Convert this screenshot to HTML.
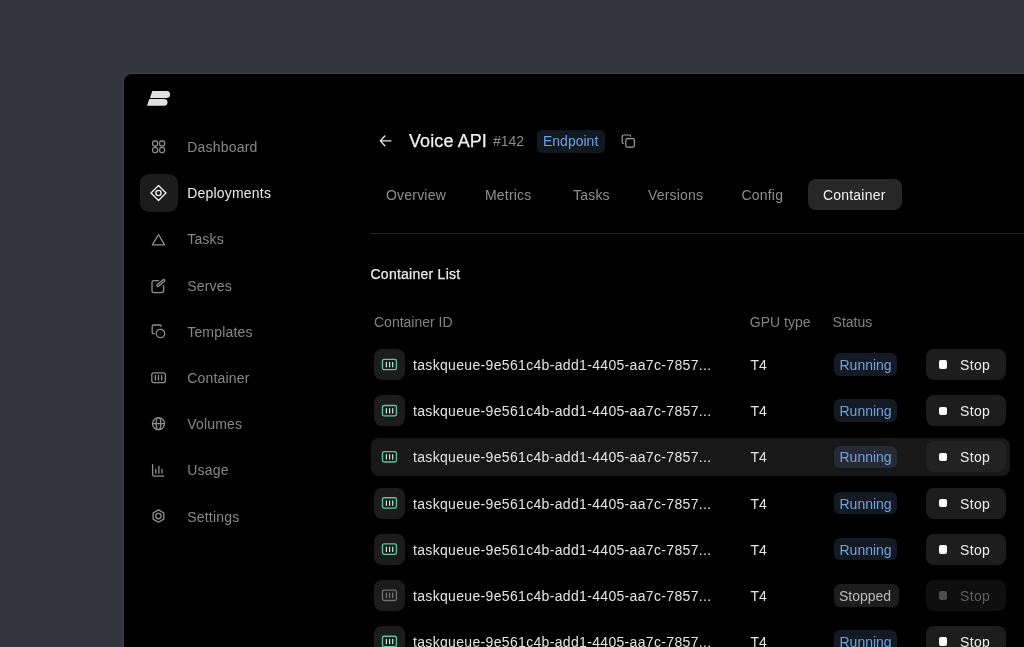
<!DOCTYPE html>
<html><head><meta charset="utf-8"><title>Container</title><style>
*{margin:0;padding:0;box-sizing:border-box}
html,body{width:1024px;height:647px;overflow:hidden;background:#33363d;font-family:"Liberation Sans",sans-serif}
#root{position:absolute;left:0;top:0;width:1024px;height:647px;will-change:transform}
.abs{position:absolute}
.t{position:absolute;font-size:14px;line-height:20px;white-space:nowrap}
#panel{position:absolute;left:123px;top:73px;width:920px;height:600px;background:#000000;border-radius:9px;border:1px solid #3d4047}
svg{position:absolute;overflow:visible}
</style></head>
<body><div id="root">
<div id="panel"></div>
<svg class="abs" style="left:0;top:0" width="1024" height="647"><g fill="#e0e0e0">
<path d="M152.3 91 H166.6 A3.45 3.45 0 0 1 166.6 97.9 H149.9 Z"/>
<path d="M149.3 99 H164.2 A3.35 3.35 0 0 1 164.2 105.7 H147 Z"/>
</g></svg>
<div class="abs" style="left:140px;top:174px;width:38px;height:38px;border-radius:9px;background:#1c1c1c"></div>
<div class="t" style="left:187.2px;top:137.05px;color:#878787;letter-spacing:0.2px">Dashboard</div>
<div class="t" style="left:187.2px;top:183.25px;color:#ececec;letter-spacing:0.2px">Deployments</div>
<div class="t" style="left:187.2px;top:229.45px;color:#878787;letter-spacing:0.2px">Tasks</div>
<div class="t" style="left:187.2px;top:275.65px;color:#878787;letter-spacing:0.2px">Serves</div>
<div class="t" style="left:187.2px;top:321.85px;color:#878787;letter-spacing:0.2px">Templates</div>
<div class="t" style="left:187.2px;top:368.05px;color:#878787;letter-spacing:0.2px">Container</div>
<div class="t" style="left:187.2px;top:414.25px;color:#878787;letter-spacing:0.2px">Volumes</div>
<div class="t" style="left:187.2px;top:460.45px;color:#878787;letter-spacing:0.2px">Usage</div>
<div class="t" style="left:187.2px;top:506.65px;color:#878787;letter-spacing:0.2px">Settings</div>
<svg style="left:0;top:0" width="1024" height="647" fill="none" stroke="#8f8f8f" stroke-width="1.3" stroke-linecap="round" stroke-linejoin="round">
<g><rect x="152.6" y="141" width="5" height="5" rx="1.8"/><rect x="159.6" y="141" width="5" height="5" rx="1.8"/><rect x="152.6" y="147.6" width="5" height="5" rx="1.8"/><rect x="159.6" y="147.6" width="5" height="5" rx="1.8"/></g>
<g stroke="#f0f0f0" stroke-width="1.4"><path d="M158.5 185.5 L166 193 L158.5 200.5 L151 193 Z"/><circle cx="158.5" cy="193" r="2.6"/></g>
<path d="M158.5 234.5 L164.6 244.8 H152.4 Z"/>
<path d="M158.6 280.6 H154 A2 2 0 0 0 152 282.6 V290.6 A2 2 0 0 0 154 292.6 H161.6 A2 2 0 0 0 163.6 290.6 V285.6"/>
<rect x="155.9" y="282.1" width="9.8" height="1.9" rx="0.95" transform="rotate(-40 160.8 283.05)"/>
<path d="M154.3 333.7 H153.5 A1.3 1.3 0 0 1 152.2 332.4 V326.3 A1.3 1.3 0 0 1 153.5 325 H159.8 A1.3 1.3 0 0 1 161.1 326.3"/>
<circle cx="160.5" cy="333.5" r="4.2"/>
<rect x="151.8" y="372.8" width="13.6" height="9.8" rx="2"/>
<path d="M155.4 375.4 V380.1 M158.5 375.4 V380.1 M161.6 375.4 V380.1"/>
<circle cx="158.5" cy="423.7" r="6.0"/><path d="M152.5 423.7 H164.5"/><ellipse cx="158.5" cy="423.7" rx="2.3" ry="6.0"/>
<path d="M152.6 464.6 V474.6 A1.6 1.6 0 0 0 154.2 476.2 H163.8"/>
<path d="M155.8 469.5 V473.2 M158.9 466.5 V473.2 M162 469.5 V473.2"/>
<path d="M158.45 509.9 L163.8 513 V519.1 L158.45 522.2 L153.1 519.1 V513 Z"/><circle cx="158.45" cy="516.05" r="2.7"/>
</svg>
<svg style="left:0;top:0" width="1024" height="647" fill="none" stroke="#e6e6e6" stroke-width="1.4" stroke-linecap="round" stroke-linejoin="round">
<path d="M390.9 140.9 H380.4 M384.8 136 L380.4 140.9 L384.8 145.8"/>
<g stroke="#a0a0a0" stroke-width="1.95" transform="translate(621.0 133.8) scale(0.605)"><rect x="8" y="8" width="14" height="14" rx="2.4"/><path d="M4 16c-1.1 0-2-.9-2-2V4c0-1.1.9-2 2-2h10c1.1 0 2 .9 2 2"/></g>
</svg>
<div class="t" style="left:409px;top:128.66px;font-size:18px;line-height:24px;color:#f2f2f2;letter-spacing:0.1px;-webkit-text-stroke:0.25px #f2f2f2">Voice API</div>
<div class="t" style="left:493px;top:130.95px;color:#8c8c8c">#142</div>
<div class="abs" style="left:537px;top:129.5px;width:68px;height:23px;border-radius:5px;background:#12181f"></div>
<div class="t" style="left:543px;top:130.95px;color:#6ca2e8">Endpoint</div>
<div class="t" style="left:386px;top:184.75px;color:#8e8e8e;letter-spacing:0.2px">Overview</div>
<div class="t" style="left:485px;top:184.75px;color:#8e8e8e;letter-spacing:0.2px">Metrics</div>
<div class="t" style="left:573px;top:184.75px;color:#8e8e8e;letter-spacing:0.2px">Tasks</div>
<div class="t" style="left:648px;top:184.75px;color:#8e8e8e;letter-spacing:0.2px">Versions</div>
<div class="t" style="left:741.5px;top:184.75px;color:#8e8e8e;letter-spacing:0.2px">Config</div>
<div class="abs" style="left:808px;top:179px;width:94px;height:31px;border-radius:8px;background:#272727"></div>
<div class="t" style="left:823px;top:184.75px;color:#f2f2f2;letter-spacing:0.2px">Container</div>
<div class="abs" style="left:370px;top:233px;width:660px;height:1px;background:#232323"></div>
<div class="t" style="left:370.5px;top:263.95px;color:#ececec;letter-spacing:0.25px;-webkit-text-stroke:0.25px #ececec">Container List</div>
<div class="t" style="left:374px;top:312.15px;color:#838383">Container ID</div>
<div class="t" style="left:749.8px;top:312.05px;color:#838383">GPU type</div>
<div class="t" style="left:832.6px;top:312.05px;color:#838383">Status</div>
<div class="abs" style="left:374.3px;top:349.2px;width:31px;height:31px;border-radius:8px;background:#1c1c1c"></div>
<svg style="left:0;top:0" width="1024" height="647" fill="none" stroke-linecap="round"><rect x="382.45" y="359.3" width="14" height="10.4" rx="1.7" stroke="#62c39e" stroke-width="1.35"/><path d="M386.4 362.4 V366.8 M389.6 362.4 V366.8 M392.7 362.4 V366.8" stroke="#bfe6d4" stroke-width="1.25"/></svg>
<div class="t" style="left:413px;top:354.85px;color:#e4e4e4;letter-spacing:0.33px">taskqueue-9e561c4b-add1-4405-aa7c-7857...</div>
<div class="t" style="left:750.5px;top:354.85px;color:#e4e4e4">T4</div>
<div class="abs" style="left:834px;top:353.3px;width:63px;height:22.6px;border-radius:6px;background:rgba(68,93,125,0.28)"></div>
<div class="t" style="left:839.5px;top:354.85px;color:#74a2dc">Running</div>
<div class="abs" style="left:926px;top:349.1px;width:80px;height:31px;border-radius:8px;background:#1d1d1d"></div>
<div class="abs" style="left:938.8px;top:360.4px;width:8.5px;height:8.5px;border-radius:2px;background:#ffffff"></div>
<div class="t" style="left:960px;top:354.85px;color:#ececec;letter-spacing:0.35px">Stop</div>
<div class="abs" style="left:374.3px;top:395.35px;width:31px;height:31px;border-radius:8px;background:#1c1c1c"></div>
<svg style="left:0;top:0" width="1024" height="647" fill="none" stroke-linecap="round"><rect x="382.45" y="405.45" width="14" height="10.4" rx="1.7" stroke="#62c39e" stroke-width="1.35"/><path d="M386.4 408.55 V412.95 M389.6 408.55 V412.95 M392.7 408.55 V412.95" stroke="#bfe6d4" stroke-width="1.25"/></svg>
<div class="t" style="left:413px;top:401.07px;color:#e4e4e4;letter-spacing:0.33px">taskqueue-9e561c4b-add1-4405-aa7c-7857...</div>
<div class="t" style="left:750.5px;top:401.07px;color:#e4e4e4">T4</div>
<div class="abs" style="left:834px;top:399.45px;width:63px;height:22.6px;border-radius:6px;background:rgba(68,93,125,0.28)"></div>
<div class="t" style="left:839.5px;top:401.07px;color:#74a2dc">Running</div>
<div class="abs" style="left:926px;top:395.25px;width:80px;height:31px;border-radius:8px;background:#1d1d1d"></div>
<div class="abs" style="left:938.8px;top:406.55px;width:8.5px;height:8.5px;border-radius:2px;background:#ffffff"></div>
<div class="t" style="left:960px;top:401.07px;color:#ececec;letter-spacing:0.35px">Stop</div>
<div class="abs" style="left:371px;top:437.9px;width:639px;height:38px;border-radius:8px;background:#181818"></div>
<svg style="left:0;top:0" width="1024" height="647" fill="none" stroke-linecap="round"><rect x="382.45" y="451.6" width="14" height="10.4" rx="1.7" stroke="#62c39e" stroke-width="1.35"/><path d="M386.4 454.7 V459.1 M389.6 454.7 V459.1 M392.7 454.7 V459.1" stroke="#bfe6d4" stroke-width="1.25"/></svg>
<div class="t" style="left:413px;top:447.29px;color:#e4e4e4;letter-spacing:0.33px">taskqueue-9e561c4b-add1-4405-aa7c-7857...</div>
<div class="t" style="left:750.5px;top:447.29px;color:#e4e4e4">T4</div>
<div class="abs" style="left:834px;top:445.6px;width:63px;height:22.6px;border-radius:6px;background:rgba(68,93,125,0.28)"></div>
<div class="t" style="left:839.5px;top:447.29px;color:#74a2dc">Running</div>
<div class="abs" style="left:926px;top:441.4px;width:80px;height:31px;border-radius:8px;background:#222222"></div>
<div class="abs" style="left:938.8px;top:452.7px;width:8.5px;height:8.5px;border-radius:2px;background:#ffffff"></div>
<div class="t" style="left:960px;top:447.29px;color:#ececec;letter-spacing:0.35px">Stop</div>
<div class="abs" style="left:374.3px;top:487.65px;width:31px;height:31px;border-radius:8px;background:#1c1c1c"></div>
<svg style="left:0;top:0" width="1024" height="647" fill="none" stroke-linecap="round"><rect x="382.45" y="497.75" width="14" height="10.4" rx="1.7" stroke="#62c39e" stroke-width="1.35"/><path d="M386.4 500.85 V505.25 M389.6 500.85 V505.25 M392.7 500.85 V505.25" stroke="#bfe6d4" stroke-width="1.25"/></svg>
<div class="t" style="left:413px;top:493.51px;color:#e4e4e4;letter-spacing:0.33px">taskqueue-9e561c4b-add1-4405-aa7c-7857...</div>
<div class="t" style="left:750.5px;top:493.51px;color:#e4e4e4">T4</div>
<div class="abs" style="left:834px;top:491.75px;width:63px;height:22.6px;border-radius:6px;background:rgba(68,93,125,0.28)"></div>
<div class="t" style="left:839.5px;top:493.51px;color:#74a2dc">Running</div>
<div class="abs" style="left:926px;top:487.55px;width:80px;height:31px;border-radius:8px;background:#1d1d1d"></div>
<div class="abs" style="left:938.8px;top:498.85px;width:8.5px;height:8.5px;border-radius:2px;background:#ffffff"></div>
<div class="t" style="left:960px;top:493.51px;color:#ececec;letter-spacing:0.35px">Stop</div>
<div class="abs" style="left:374.3px;top:533.8px;width:31px;height:31px;border-radius:8px;background:#1c1c1c"></div>
<svg style="left:0;top:0" width="1024" height="647" fill="none" stroke-linecap="round"><rect x="382.45" y="543.9" width="14" height="10.4" rx="1.7" stroke="#62c39e" stroke-width="1.35"/><path d="M386.4 547.0 V551.4 M389.6 547.0 V551.4 M392.7 547.0 V551.4" stroke="#bfe6d4" stroke-width="1.25"/></svg>
<div class="t" style="left:413px;top:539.73px;color:#e4e4e4;letter-spacing:0.33px">taskqueue-9e561c4b-add1-4405-aa7c-7857...</div>
<div class="t" style="left:750.5px;top:539.73px;color:#e4e4e4">T4</div>
<div class="abs" style="left:834px;top:537.9px;width:63px;height:22.6px;border-radius:6px;background:rgba(68,93,125,0.28)"></div>
<div class="t" style="left:839.5px;top:539.73px;color:#74a2dc">Running</div>
<div class="abs" style="left:926px;top:533.7px;width:80px;height:31px;border-radius:8px;background:#1d1d1d"></div>
<div class="abs" style="left:938.8px;top:545.0px;width:8.5px;height:8.5px;border-radius:2px;background:#ffffff"></div>
<div class="t" style="left:960px;top:539.73px;color:#ececec;letter-spacing:0.35px">Stop</div>
<div class="abs" style="left:374.3px;top:579.95px;width:31px;height:31px;border-radius:8px;background:#1c1c1c"></div>
<svg style="left:0;top:0" width="1024" height="647" fill="none" stroke-linecap="round"><rect x="382.45" y="590.05" width="14" height="10.4" rx="1.7" stroke="#6f6f6f" stroke-width="1.35"/><path d="M386.4 593.15 V597.55 M389.6 593.15 V597.55 M392.7 593.15 V597.55" stroke="#7a7a7a" stroke-width="1.25"/></svg>
<div class="t" style="left:413px;top:585.95px;color:#e4e4e4;letter-spacing:0.33px">taskqueue-9e561c4b-add1-4405-aa7c-7857...</div>
<div class="t" style="left:750.5px;top:585.95px;color:#e4e4e4">T4</div>
<div class="abs" style="left:833.5px;top:584.05px;width:65.5px;height:22.6px;border-radius:6px;background:#1d1d1d"></div>
<div class="t" style="left:839px;top:585.95px;color:#b8b8b8">Stopped</div>
<div class="abs" style="left:926px;top:579.85px;width:80px;height:31px;border-radius:8px;background:#0f0f0f"></div>
<div class="abs" style="left:938.8px;top:591.15px;width:8.5px;height:8.5px;border-radius:2px;background:#4d4d4d"></div>
<div class="t" style="left:960px;top:585.95px;color:#5e5e5e;letter-spacing:0.35px">Stop</div>
<div class="abs" style="left:374.3px;top:626.1px;width:31px;height:31px;border-radius:8px;background:#1c1c1c"></div>
<svg style="left:0;top:0" width="1024" height="647" fill="none" stroke-linecap="round"><rect x="382.45" y="636.2" width="14" height="10.4" rx="1.7" stroke="#62c39e" stroke-width="1.35"/><path d="M386.4 639.3 V643.7 M389.6 639.3 V643.7 M392.7 639.3 V643.7" stroke="#bfe6d4" stroke-width="1.25"/></svg>
<div class="t" style="left:413px;top:632.17px;color:#e4e4e4;letter-spacing:0.33px">taskqueue-9e561c4b-add1-4405-aa7c-7857...</div>
<div class="t" style="left:750.5px;top:632.17px;color:#e4e4e4">T4</div>
<div class="abs" style="left:834px;top:630.2px;width:63px;height:22.6px;border-radius:6px;background:rgba(68,93,125,0.28)"></div>
<div class="t" style="left:839.5px;top:632.17px;color:#74a2dc">Running</div>
<div class="abs" style="left:926px;top:626.0px;width:80px;height:31px;border-radius:8px;background:#1d1d1d"></div>
<div class="abs" style="left:938.8px;top:637.3px;width:8.5px;height:8.5px;border-radius:2px;background:#ffffff"></div>
<div class="t" style="left:960px;top:632.17px;color:#ececec;letter-spacing:0.35px">Stop</div>
</div></body></html>
